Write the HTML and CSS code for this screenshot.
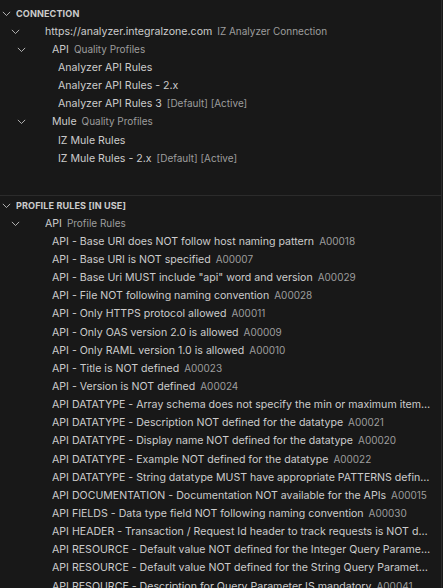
FILE: index.html
```html
<!DOCTYPE html>
<html lang="en">
<head>
	<meta charset="UTF-8">
	<title>IZ Analyzer</title>
	<link rel="stylesheet" href="styles.css">
</head>
<body>
	<div class="sidebar">
		<div class="pane pane-connection">
			<div class="row section-head">
				<svg class="twistie" viewBox="0 0 16 16"><path d="M3.5 6 L8 10.5 L12.5 6"/></svg>
				<span class="label">Connection</span>
			</div>
			<div class="row lvl1">
				<svg class="twistie" viewBox="0 0 16 16"><path d="M3.5 6 L8 10.5 L12.5 6"/></svg>
				<span class="label">https://analyzer.integralzone.com<span class="desc">IZ Analyzer Connection</span></span>
			</div>
			<div class="row lvl2">
				<svg class="twistie" viewBox="0 0 16 16"><path d="M3.5 6 L8 10.5 L12.5 6"/></svg>
				<span class="label">API<span class="desc">Quality Profiles</span></span>
			</div>
			<div class="row leaf3"><span class="label">Analyzer API Rules</span></div>
			<div class="row leaf3"><span class="label">Analyzer API Rules - 2.x</span></div>
			<div class="row leaf3"><span class="label">Analyzer API Rules 3<span class="desc">[Default] [Active]</span></span></div>
			<div class="row lvl2">
				<svg class="twistie" viewBox="0 0 16 16"><path d="M3.5 6 L8 10.5 L12.5 6"/></svg>
				<span class="label">Mule<span class="desc">Quality Profiles</span></span>
			</div>
			<div class="row leaf3"><span class="label">IZ Mule Rules</span></div>
			<div class="row leaf3"><span class="label">IZ Mule Rules - 2.x<span class="desc">[Default] [Active]</span></span></div>
		</div>

		<div class="pane pane-rules">
			<div class="row section-head">
				<svg class="twistie" viewBox="0 0 16 16"><path d="M3.5 6 L8 10.5 L12.5 6"/></svg>
				<span class="label">Profile Rules [In Use]</span>
			</div>
			<div class="row lvl1">
				<svg class="twistie" viewBox="0 0 16 16"><path d="M3.5 6 L8 10.5 L12.5 6"/></svg>
				<span class="label">API<span class="desc">Profile Rules</span></span>
			</div>
			<div class="row leaf2"><span class="label">API - Base URI does NOT follow host naming pattern<span class="desc">A00018</span></span></div>
			<div class="row leaf2"><span class="label">API - Base URI is NOT specified<span class="desc">A00007</span></span></div>
			<div class="row leaf2"><span class="label">API - Base Uri MUST include "api" word and version<span class="desc">A00029</span></span></div>
			<div class="row leaf2"><span class="label">API - File NOT following naming convention<span class="desc">A00028</span></span></div>
			<div class="row leaf2"><span class="label">API - Only HTTPS protocol allowed<span class="desc">A00011</span></span></div>
			<div class="row leaf2"><span class="label">API - Only OAS version 2.0 is allowed<span class="desc">A00009</span></span></div>
			<div class="row leaf2"><span class="label">API - Only RAML version 1.0 is allowed<span class="desc">A00010</span></span></div>
			<div class="row leaf2"><span class="label">API - Title is NOT defined<span class="desc">A00023</span></span></div>
			<div class="row leaf2"><span class="label">API - Version is NOT defined<span class="desc">A00024</span></span></div>
			<div class="row leaf2"><span class="label">API DATATYPE - Array schema does not specify the min or maximum items<span class="desc">A00019</span></span></div>
			<div class="row leaf2"><span class="label">API DATATYPE - Description NOT defined for the datatype<span class="desc">A00021</span></span></div>
			<div class="row leaf2"><span class="label">API DATATYPE - Display name NOT defined for the datatype<span class="desc">A00020</span></span></div>
			<div class="row leaf2"><span class="label">API DATATYPE - Example NOT defined for the datatype<span class="desc">A00022</span></span></div>
			<div class="row leaf2"><span class="label">API DATATYPE - String datatype MUST have appropriate PATTERNS defined<span class="desc">A00025</span></span></div>
			<div class="row leaf2"><span class="label">API DOCUMENTATION - Documentation NOT available for the APIs<span class="desc">A00015</span></span></div>
			<div class="row leaf2"><span class="label">API FIELDS - Data type field NOT following naming convention<span class="desc">A00030</span></span></div>
			<div class="row leaf2"><span class="label">API HEADER - Transaction / Request Id header to track requests is NOT defined<span class="desc">A00040</span></span></div>
			<div class="row leaf2"><span class="label">API RESOURCE - Default value NOT defined for the Integer Query Parameter<span class="desc">A00042</span></span></div>
			<div class="row leaf2"><span class="label">API RESOURCE - Default value NOT defined for the String Query Parameter<span class="desc">A00043</span></span></div>
			<div class="row leaf2"><span class="label">API RESOURCE - Description for Query Parameter IS mandatory<span class="desc">A00041</span></span></div>
		</div>
	</div>
</body>
</html>
```

FILE: styles.css
```css
body{
	margin: 0px;
	background-color: #181818;
	color: #cccccc;
	font-family: Inter, "Noto Sans", sans-serif;
	font-size: 10.6px;
	overflow: hidden;
}
.sidebar{
	width: 441px;
	height: 588px;
	border-right: 1px solid #2b2b2b;
	overflow: hidden;
}
.pane-connection{
	height: 191px;
	padding-top: 4px;
}
.pane-rules{
	border-top: 1px solid #2b2b2b;
}
.row{
	display: flex;
	align-items: center;
	height: 18.15px;
	white-space: nowrap;
	padding-right: 8px;
}
.twistie{
	flex: none;
	width: 13px;
	height: 13px;
	fill: none;
	stroke: #c5c5c5;
	stroke-width: 1.1;
}
.label{
	flex: 1;
	min-width: 0;
	overflow: hidden;
	text-overflow: ellipsis;
}
.desc{
	margin-left: 5px;
	color: #9d9d9d;
	font-size: 0.94em;
}

.section-head{
	font-size: 9.1px;
	font-weight: 700;
	text-transform: uppercase;
	letter-spacing: 0.1px;
}
.section-head .twistie{
	margin-left: 0px;
	margin-right: 3px;
}
.lvl1 .twistie{
	margin-left: 8.5px;
	margin-right: 23.5px;
}
.lvl2 .twistie{
	margin-left: 14.5px;
	margin-right: 24.5px;
}
.leaf2{
	padding-left: 52px;
}
.leaf3{
	padding-left: 58px;
}
```
